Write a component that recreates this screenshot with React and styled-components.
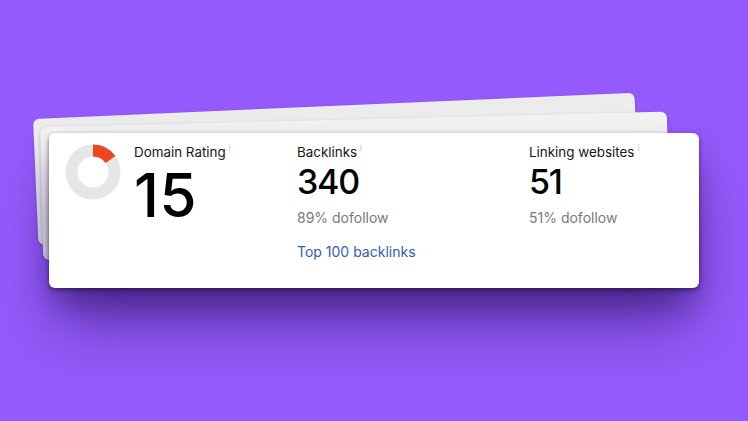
import React from "react";
import styled, { createGlobalStyle } from "styled-components";

const Global = createGlobalStyle`
  html, body { margin: 0; padding: 0; }
  body { font-family: Inter, "Noto Sans", sans-serif; }
`;

const Stage = styled.div`
  width: 748px;
  height: 421px;
  background: #955afb;
  overflow: hidden;
  padding: 133px 0 0 49px;
  box-sizing: border-box;
`;

const Stack = styled.div`
  position: relative;
  width: 650px;
  height: 155px;
`;

const BackSheet = styled.div`
  position: absolute;
  left: ${(p) => p.$left}px;
  top: ${(p) => p.$top}px;
  width: ${(p) => p.$w}px;
  height: ${(p) => p.$h}px;
  border-radius: 6px;
  background: ${(p) => p.$bg};
  transform-origin: 0 0;
  transform: rotate(${(p) => p.$rot}deg);
  box-shadow: 0 1px 3px rgba(40, 10, 90, 0.25);
`;

const Card = styled.div`
  position: relative;
  height: 155px;
  box-sizing: border-box;
  background: #fff;
  border-radius: 6px;
  padding: 11px 16px 10px;
  display: grid;
  grid-template-columns: 232px 232px 1fr;
  box-shadow: 0 2px 4px rgba(30, 10, 60, 0.6),
    0 20px 30px -6px rgba(35, 12, 80, 0.45),
    0 44px 60px -10px rgba(40, 16, 90, 0.5);
`;

const Metric = styled.div`
  display: flex;
  gap: 13px;
  align-items: flex-start;
`;

const DonutBox = styled.svg`
  flex: none;
`;

const Col = styled.div`
  display: flex;
  flex-direction: column;
`;

const Label = styled.div`
  font-size: 13.4px;
  line-height: 17px;
  color: #151515;
`;

const Info = styled.sup`
  font-size: 8px;
  color: #bdbdbd;
  margin-left: 3px;
  vertical-align: 6px;
  line-height: 0;
`;

const Big = styled.div`
  font-size: 60px;
  line-height: 73px;
  font-weight: 500;
  color: #000;
  letter-spacing: 0.5px;
  margin-top: -2px;
`;

const Num = styled.div`
  font-size: 34px;
  line-height: 41px;
  font-weight: 450;
  color: #000;
  letter-spacing: -1.2px;
  margin-top: 0;
`;

const Sub = styled.div`
  font-size: 14px;
  line-height: 20px;
  color: #7a7a7a;
  margin-top: 6px;
`;

const Link = styled.a`
  font-size: 14px;
  line-height: 20px;
  color: #2f5db3;
  text-decoration: none;
  margin-top: 14px;
`;

function Donut({ value }) {
  const r = 21.5;
  const c = 2 * Math.PI * r;
  return (
    <DonutBox width="56" height="56" viewBox="0 0 56 56">
      <circle cx="28" cy="28" r={r} fill="none" stroke="#e6e6e6" strokeWidth="12" />
      <circle
        cx="28"
        cy="28"
        r={r}
        fill="none"
        stroke="#ef4423"
        strokeWidth="12"
        strokeDasharray={`${(c * value) / 100} ${c}`}
        transform="rotate(-90 28 28)"
      />
    </DonutBox>
  );
}

export default function App() {
  return (
    <>
      <Global />
      <Stage>
        <Stack>
          <BackSheet $left={-16} $top={-14} $w={602} $h={126} $rot={-2.5} $bg="#ececec" />
          <BackSheet $left={-9} $top={-6} $w={627} $h={133} $rot={-1.4} $bg="#f2f2f2" />
          <Card>
            <Metric>
              <Donut value={15} />
              <Col>
                <Label>
                  Domain Rating<Info>i</Info>
                </Label>
                <Big>15</Big>
              </Col>
            </Metric>
            <Col>
              <Label>
                Backlinks<Info>i</Info>
              </Label>
              <Num>340</Num>
              <Sub>89% dofollow</Sub>
              <Link href="#">Top 100 backlinks</Link>
            </Col>
            <Col>
              <Label>
                Linking websites<Info>i</Info>
              </Label>
              <Num>51</Num>
              <Sub>51% dofollow</Sub>
            </Col>
          </Card>
        </Stack>
      </Stage>
    </>
  );
}
